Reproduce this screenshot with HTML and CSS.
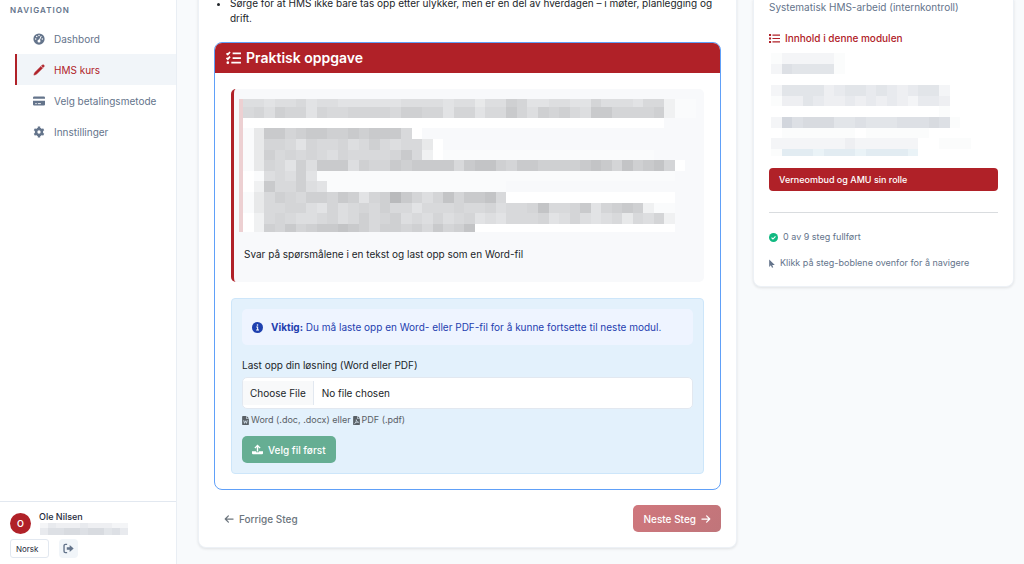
FILE: index.html
```html
<!DOCTYPE html>
<html lang="no">
<head>
    <meta charset="UTF-8">
    <title>HMS kurs</title>
    <link rel="stylesheet" href="styles.css">
</head>
<body>
    <div class="layout">
        <aside class="sidebar">
            <div class="nav-title">NAVIGATION</div>
            <nav class="nav">
                <a href="#" class="nav-link">
                    <svg class="nav-icon" viewBox="0 0 16 16"><circle cx="8" cy="8" r="7.5" fill="currentColor"/><g fill="#fff"><circle cx="3.6" cy="8" r="1"/><circle cx="5" cy="4.6" r="1"/><circle cx="8" cy="3.3" r="1"/><circle cx="12.4" cy="8" r="1"/><circle cx="8" cy="10.8" r="2"/></g><path d="M8 10.5l2.8-6" stroke="#fff" stroke-width="1.3" stroke-linecap="round"/></svg>
                    Dashbord
                </a>
                <a href="#" class="nav-link active">
                    <svg class="nav-icon" viewBox="0 0 16 16"><path d="M1.200 14.800l1-3.200 8.300-8.300 2.200 2.200-8.300 8.300z M11.300 2.500l1-1a1.500 1.500 0 0 1 2.200 2.200l-1 1z" fill="currentColor" stroke="currentColor" stroke-width=".8" stroke-linejoin="round"/></svg>
                    HMS kurs
                </a>
                <a href="#" class="nav-link">
                    <svg class="nav-icon" viewBox="0 0 16 16"><path d="M1.500 2h13A1.500 1.500 0 0 1 16 3.500V5H0V3.500A1.500 1.500 0 0 1 1.500 2zM0 7.500h16v5a1.500 1.500 0 0 1-1.500 1.500h-13A1.500 1.500 0 0 1 0 12.500z" fill="currentColor"/><path d="M3 11.500h2M6.500 11.500h4" stroke="#fff" stroke-width="1.2"/></svg>
                    Velg betalingsmetode
                </a>
                <a href="#" class="nav-link">
                    <svg class="nav-icon" viewBox="0 0 16 16"><circle cx="8" cy="8" r="3.900" fill="none" stroke="currentColor" stroke-width="3.400"/><path d="M8 .8v3M8 12.200v3M1.800 4.400l2.600 1.500M11.600 10.100l2.600 1.500M1.800 11.600l2.600-1.500M11.600 5.900l2.600-1.500" stroke="currentColor" stroke-width="3.200"/></svg>
                    Innstillinger
                </a>
            </nav>
            <div class="sidebar-footer">
                <div class="user">
                    <div class="avatar">O</div>
                    <div class="user-info">
                        <div class="user-name">Ole Nilsen</div>
                        <svg class="mosaic mosaic-mail" data-mosaic="mail" preserveAspectRatio="none"></svg>
                    </div>
                </div>
                <div class="user-actions">
                    <select class="lang" aria-label="Språk"><option>Norsk</option></select>
                    <button class="logout" aria-label="Logg ut">
                        <svg viewBox="0 0 16 16"><path d="M6 2H3.500A2 2 0 0 0 1.500 4v8a2 2 0 0 0 2 2H6" fill="none" stroke="currentColor" stroke-width="2"/><path d="M5.500 6.200h4.200V3l5.800 5-5.800 5V9.800H5.500z" fill="currentColor"/></svg>
                    </button>
                </div>
            </div>
        </aside>

        <main class="content">
            <section class="course-card">
                <ul class="course-list">
                    <li>Sørge for at HMS ikke bare tas opp etter ulykker, men er en del av hverdagen – i møter, planlegging og drift.</li>
                </ul>

                <div class="task">
                    <h2 class="task-header">
                        <svg class="task-icon" viewBox="0 0 18 16"><path d="M1 2.600l1.500 1.500L5 1.200M1 7.800l1.500 1.500L5 6.400M8 2.700h9.500M8 8h9.500M6.500 13.300h11" fill="none" stroke="currentColor" stroke-width="2"/><circle cx="2.500" cy="13.300" r="1.500" fill="currentColor"/></svg>
                        Praktisk oppgave
                    </h2>
                    <div class="task-body">
                        <div class="task-text">
                            <div class="redacted">
                                <svg class="mosaic mosaic-task" data-mosaic="task" preserveAspectRatio="none"></svg>
                            </div>
                            <p>Svar på spørsmålene i en tekst og last opp som en Word-fil</p>
                        </div>

                        <form class="upload">
                            <div class="alert">
                                <svg class="alert-icon" viewBox="0 0 16 16"><circle cx="8" cy="8" r="8" fill="currentColor"/><path d="M6.200 7.300h2v4.200M6 11.700h4.200" fill="none" stroke="#fff" stroke-width="1.500"/><circle cx="8" cy="4.400" r="1.200" fill="#fff"/></svg>
                                <span><strong>Viktig:</strong> Du må laste opp en Word- eller PDF-fil for å kunne fortsette til neste modul.</span>
                            </div>
                            <label class="upload-label" for="losning">Last opp din løsning (Word eller PDF)</label>
                            <input class="upload-file" type="file" id="losning" accept=".doc,.docx,.pdf">
                            <div class="upload-help">
                                <svg class="file-icon" viewBox="0 0 12 16"><path d="M1.500 0H7v5h5v9.500a1.500 1.500 0 0 1-1.500 1.500h-9A1.500 1.500 0 0 1 0 14.500v-13A1.500 1.500 0 0 1 1.500 0zM8 0l4 4H8z" fill="currentColor"/><path d="M2.800 7.500L4.200 13 6 8.500 7.800 13l1.400-5.500" fill="none" stroke="#e3f1fc" stroke-width="1.300"/></svg>
                                Word (.doc, .docx) eller
                                <svg class="file-icon" viewBox="0 0 12 16"><path d="M1.500 0H7v5h5v9.500a1.500 1.500 0 0 1-1.500 1.500h-9A1.500 1.500 0 0 1 0 14.500v-13A1.500 1.500 0 0 1 1.500 0zM8 0l4 4H8z" fill="currentColor"/><path d="M2.500 13.500C5 12 6 9 5.600 6.500 6 9.500 7.500 11 9.800 11.200 7 10.800 4.500 11.500 2.500 13.500z" fill="none" stroke="#e3f1fc" stroke-width="1.100"/></svg>
                                PDF (.pdf)
                            </div>
                            <button class="btn btn-upload" type="button">
                                <svg class="btn-icon" viewBox="0 0 16 16"><path d="M8 11V2.500M4.200 6L8 2l3.800 4" fill="none" stroke="currentColor" stroke-width="2"/><path d="M0 10.500h6V12h4v-1.500h6v3a1.500 1.500 0 0 1-1.500 1.500h-13A1.500 1.500 0 0 1 0 13.500z" fill="currentColor"/></svg>
                                Velg fil først
                            </button>
                        </form>
                    </div>
                </div>

                <div class="steps">
                    <button class="btn btn-prev">
                        <svg class="btn-arrow" viewBox="0 0 16 16"><path d="M14.500 8H2M7 3L2 8l5 5" fill="none" stroke="currentColor" stroke-width="2" stroke-linecap="round" stroke-linejoin="round"/></svg>
                        Forrige Steg
                    </button>
                    <button class="btn btn-next">
                        Neste Steg
                        <svg class="btn-arrow" viewBox="0 0 16 16"><path d="M1.500 8H14M9 3l5 5-5 5" fill="none" stroke="currentColor" stroke-width="2" stroke-linecap="round" stroke-linejoin="round"/></svg>
                    </button>
                </div>
            </section>

            <aside class="module-card">
                <div class="module-name">Systematisk HMS-arbeid (internkontroll)</div>
                <h3 class="module-title">
                    <svg class="list-icon" viewBox="0 0 16 16"><path d="M5 3h11M5 8h11M5 13h11" stroke="currentColor" stroke-width="1.800"/><path d="M0 3h3M0 8h3M0 13h3" stroke="currentColor" stroke-width="3"/></svg>
                    Innhold i denne modulen
                </h3>
                <svg class="mosaic mosaic-module" data-mosaic="module" preserveAspectRatio="none"></svg>
                <a href="#" class="module-link">Verneombud og AMU sin rolle</a>
                <hr>
                <div class="module-info">
                    <svg class="check-icon" viewBox="0 0 16 16"><circle cx="8" cy="8" r="8" fill="#10b981"/><path d="M4.500 8.200l2.500 2.500 4.500-4.700" fill="none" stroke="#fff" stroke-width="2"/></svg>
                    0 av 9 steg fullført
                </div>
                <div class="module-info">
                    <svg class="pointer-icon" viewBox="0 0 10 16"><path d="M0 1v13l3-2.700L5 15.500l2.200-1L5.300 10.500H10z" fill="currentColor"/></svg>
                    Klikk på steg-boblene ovenfor for å navigere
                </div>
            </aside>
        </main>
    </div>
    <script src="script.js"></script>
</body>
</html>
```
FILE: styles.css
```css
* {
    box-sizing: border-box;
}
body {
    margin: 0;
    font-family: Inter, "Liberation Sans", sans-serif;
    font-size: 10px;
    line-height: 16px;
    color: #212529;
    background: #f8fafc;
}
h2, h3, p, ul {
    margin: 0;
}
a {
    text-decoration: none;
}
svg {
    flex: none;
}
button, select, input {
    font: inherit;
}
.mosaic {
    display: block;
}
.layout {
    display: grid;
    grid-template-columns: 177px 1fr;
    height: 100vh;
    overflow: hidden;
}

/* sidebar */
.sidebar {
    display: flex;
    flex-direction: column;
    background: #fff;
    border-right: 1px solid #e9eef4;
}
.nav-title {
    padding: 2px 10px 5px;
    font-size: 8px;
    font-weight: 600;
    letter-spacing: 1px;
    color: #64748b;
}
.nav-link {
    display: flex;
    align-items: center;
    gap: 9px;
    height: 31px;
    margin-left: 15px;
    padding-left: 16px;
    border-left: 2px solid transparent;
    color: #64748b;
}
.nav-link.active {
    color: #b02128;
    background: #f1f5f9;
    border-left-color: #b02128;
}
.nav-icon {
    width: 12px;
    height: 12px;
}
.sidebar-footer {
    margin-top: auto;
    padding: 9px 10px 6px;
    border-top: 1px solid #e2e8f0;
    font-size: 9px;
}
.user {
    display: flex;
    align-items: center;
    gap: 8px;
}
.avatar {
    width: 21px;
    height: 21px;
    border-radius: 50%;
    background: #b02128;
    color: #fff;
    font-weight: 600;
    line-height: 21px;
    text-align: center;
}
.user-name {
    font-weight: 500;
    line-height: 12px;
    color: #1e293b;
}
.mosaic-mail {
    width: 88px;
    height: 12px;
    margin-left: 1px;
}
.user-actions {
    display: flex;
    gap: 10px;
    margin-top: 4px;
}
.lang {
    appearance: none;
    width: 39px;
    height: 19px;
    padding: 0 5px;
    border: 1px solid #e2e8f0;
    border-radius: 3px;
    background: #fff;
    color: #1e293b;
    font-size: 8px;
}
.logout {
    width: 19px;
    height: 19px;
    padding: 4px;
    border: none;
    border-radius: 4px;
    background: #f1f5f9;
    color: #64748b;
}
.logout svg {
    display: block;
    width: 11px;
    height: 11px;
}

/* course */
.content {
    display: flex;
    align-items: flex-start;
    gap: 16px;
    padding: 0 10px 0 21px;
}
.course-card, .module-card {
    background: #fff;
    border: 1px solid #edf1f6;
    border-top: none;
    border-radius: 0 0 8px 8px;
    box-shadow: 0 1px 3px rgba(0, 0, 0, 0.1);
}
.course-card {
    flex: 1;
    margin-top: -4px;
    padding: 0 15px 15px;
}
.course-list {
    padding-left: 16px;
    line-height: 15px;
    margin-bottom: 16px;
}
.task {
    border: 1px solid #60a0f8;
    border-radius: 8px;
    overflow: hidden;
}
.task-header {
    display: flex;
    align-items: center;
    gap: 4px;
    height: 30px;
    padding: 0 10px;
    background: #b02128;
    color: #fff;
    font-size: 14px;
    font-weight: 600;
}
.task-icon {
    width: 17px;
    height: 14px;
}
.task-body {
    padding: 16px 16px 15px;
}
.task-text {
    padding: 10px 8px 20px 5px;
    border-left: 3px solid #b02128;
    border-radius: 5px;
    background: #f8f9fb;
}
.task-text p {
    margin-top: 14px;
    padding-left: 5px;
}
.redacted {
    border-left: 4px solid #edd0d2;
}
.mosaic-task {
    width: 100%;
    height: 133px;
}

/* upload */
.upload {
    margin-top: 16px;
    padding: 10px;
    border: 1px solid #cde6fa;
    border-radius: 4px;
    background: #e3f1fc;
}
.alert {
    display: flex;
    align-items: center;
    gap: 8px;
    padding: 10px;
    border-radius: 5px;
    background: #eef4ff;
    color: #1e40af;
}
.alert-icon {
    width: 11px;
    height: 11px;
}
.upload-label {
    display: block;
    margin: 12px 0 4px;
}
.upload-file {
    display: block;
    width: 100%;
    height: 32px;
    padding: 3px 0;
    border: 1px solid #e2e8f0;
    border-radius: 5px;
    background: #fff;
}
.upload-file::file-selector-button {
    height: 24px;
    margin: 0 8px 0 0;
    padding: 0 7px;
    border: none;
    border-right: 1px solid #e2e8f0;
    background: #f8f9fa;
    color: #212529;
    font: inherit;
}
.upload-help {
    display: flex;
    align-items: center;
    gap: 2px;
    margin: 3px 0 8px;
    font-size: 9px;
    color: #596066;
}
.file-icon {
    width: 7px;
    height: 9px;
}
.btn {
    display: flex;
    align-items: center;
    gap: 5px;
    height: 27px;
    padding: 0 10px;
    border: none;
    border-radius: 5px;
    color: #fff;
    font-weight: 500;
}
.btn-upload {
    background: #66ae93;
}
.btn-icon {
    width: 11px;
    height: 11px;
}
.btn-arrow {
    width: 10px;
    height: 10px;
}
.steps {
    display: flex;
    justify-content: space-between;
    margin-top: 15px;
}
.btn-prev {
    background: none;
    color: #6c757d;
}
.btn-next {
    background: linear-gradient(135deg, #d0777d, #c0757a);
}

/* module */
.module-card {
    width: 261px;
    margin-top: -1px;
    padding: 0 15px 15px;
    color: #64748b;
}
.module-title {
    display: flex;
    align-items: center;
    gap: 5px;
    margin: 15px 0 7px;
    font-size: 10px;
    font-weight: 500;
    color: #b02128;
}
.list-icon {
    width: 11px;
    height: 11px;
}
.mosaic-module {
    width: 200px;
    height: 103px;
    margin-left: 2px;
}
.module-link {
    display: block;
    margin-top: 12px;
    padding: 0 10px;
    border-radius: 4px;
    background: #b02128;
    color: #fff;
    font-size: 9px;
    font-weight: 500;
    line-height: 23px;
}
.module-card hr {
    margin: 21px 0 16px;
    border: none;
    border-top: 1px solid #d9dcdf;
}
.module-info {
    display: flex;
    align-items: center;
    gap: 5px;
    margin-bottom: 10px;
    font-size: 9px;
}
.module-info:last-child {
    margin-bottom: 0;
}
.check-icon {
    width: 9px;
    height: 9px;
}
.pointer-icon {
    width: 6px;
    height: 9px;
}
```
FILE: script.js
```js
// masked texts: one character per cell, light (0) to dark (b), dot = empty
const gray = {
    0: '#ffffff', 1: '#fafbfc', 2: '#f0f1f2', 3: '#e8e9ea', 4: '#e2e3e5', 5: '#dddee0',
    6: '#d8d9db', 7: '#d4d5d7', 8: '#cfd0d2', 9: '#c9cacc', a: '#c3c4c6', b: '#b9babc'
};
const blue = {
    1: '#fbfcfc', 2: '#f4f5f7', 3: '#eeeff2', 4: '#e8eaee', 5: '#e2e5e9', 6: '#dde0e5',
    7: '#d8dbe0', 8: '#d2d6dd', 9: '#e2ecf2', a: '#eaf3f7'
};

const mosaics = {
    task: {
        colors: gray,
        heights: [8, 10.5, 10.5, 10.5, 10.5, 10.5, 10.5, 10.5, 10.5, 10.5, 10.5, 10.5, 8],
        rows: [
            '5545564554444445555455355874455447555466211',
            '6758774766777768877477466975878659977778211',
            '0000000000000000000000000000000000000000...',
            '13997899889899960..........................',
            '1377647667568656630........................',
            '138676765766667962011111111111111111111....',
            '1376485999587798999969aa879988889a97a89a70.',
            '01565841111111111111111111111111111111111..',
            '0296685411111111111111111..................',
            '13687688798478b9757a799a60000000000000000..',
            '1366775475676866466676675667a667947898211..',
            '02676556756867856575674546667457545636572..',
            '028797899a98688786978a0000000000000000000..'
        ]
    },
    mail: {
        colors: blue,
        heights: [5, 7],
        rows: ['24333433322', '46677677564']
    },
    module: {
        colors: blue,
        heights: [10.5, 10.5, 10.5, 10.5, 10.5, 10.5, 10.5, 10.5, 10.5, 7],
        rows: [
            '1222221............',
            '2655551............',
            '...................',
            '25555345545434552..',
            '13354334343432443..',
            '................1..',
            '286777556555666761.',
            '.1111111.111111....',
            '22222223222222..111',
            '1999a999a9999a.....'
        ]
    }
};

document.querySelectorAll('[data-mosaic]').forEach(svg => {
    const m = mosaics[svg.dataset.mosaic];
    const cols = Math.max(...m.rows.map(r => r.length));
    let y = 0;
    let html = '';
    m.rows.forEach((row, i) => {
        [...row].forEach((c, x) => {
            if (m.colors[c]) {
                html += `<rect x="${x}" y="${y}" width="1" height="${m.heights[i]}" fill="${m.colors[c]}"/>`;
            }
        });
        y += m.heights[i];
    });
    svg.setAttribute('viewBox', `0 0 ${cols} ${y}`);
    svg.setAttribute('shape-rendering', 'crispEdges');
    svg.innerHTML = html;
});
```
